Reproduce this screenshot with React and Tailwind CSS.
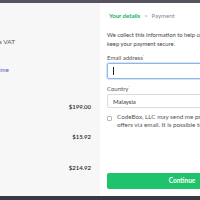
export default function App() {
  return (
    <div className="w-[200px] h-[200px] overflow-hidden flex flex-col bg-[#3b3943] font-['Lato',sans-serif]">
      {/* backdrop strip */}
      <div className="h-[3px] shrink-0 bg-[#57525f]" />

      <div className="flex h-[193px] shrink-0">
        {/* Order summary */}
        <div className="w-[100px] shrink-0 overflow-hidden flex justify-end bg-[#f7f7f8]">
          <div className="w-[200px] shrink-0 flex flex-col pr-[9px] pt-[35px] text-[6.5px] leading-[8px]">
            <p className="w-[115px] text-right text-[#555]">Price includes VAT</p>
            <p className="w-[109px] mt-[20px] text-right text-[#5b5fc7]">Cancel at any time</p>
            <p className="mt-[29px] text-right text-[6px] font-semibold text-[#222]">$199.00</p>
            <p className="mt-[22px] text-right text-[6px] font-semibold text-[#222]">$15.92</p>
            <p className="mt-[23px] text-right text-[6px] font-semibold text-[#222]">$214.92</p>
          </div>
        </div>

        {/* Checkout form */}
        <div className="flex-1 overflow-hidden bg-white pl-[7px] pt-[8px] pb-[7px] flex">
          <div className="w-[150px] shrink-0 flex flex-col">
            <div className="ml-[2px] flex items-center gap-[4px] text-[6px] leading-[9px]">
              <span className="font-bold text-[#1aae62]">Your details</span>
              <span className="text-[#999]">&gt;</span>
              <span className="text-[#888]">Payment</span>
            </div>

            <p className="mt-[10px] whitespace-nowrap text-[5.8px] leading-[9px] text-[#444]">
              We collect this information to help combat fraud, and to
              <br />
              keep your payment secure.
            </p>

            <label className="mt-[6px] text-[6px] leading-[7px] text-[#555]">
              Email address<sup className="text-[4px] text-[#888]">*</sup>
            </label>
            <div className="mt-[2px] h-[16px] rounded-[2px] border border-[#8fb4ee] shadow-[0_0_0_1px_#d6e4fa] flex items-center pl-[5px]">
              <span className="w-[0.5px] h-[8px] bg-[#222]" />
            </div>

            <label className="mt-[6px] text-[6px] leading-[7px] text-[#555]">
              Country<sup className="text-[4px] text-[#888]">*</sup>
            </label>
            <div className="mt-[2px] h-[14px] rounded-[2px] border border-[#dcdcdc] flex items-center pl-[5px] text-[6px] text-[#333]">
              Malaysia
            </div>

            <div className="mt-[5px] flex gap-[5px]">
              <span className="mt-[3px] w-[5px] h-[5px] shrink-0 rounded-[1px] border border-[#bbb]" />
              <p className="whitespace-nowrap text-[6.3px] leading-[8px] text-[#555]">
                CodeBox, LLC may send me product updates and
                <br />
                offers via email. It is possible to opt-out at any time.
              </p>
            </div>

            <button className="mt-auto h-[16px] rounded-[2px] bg-[#1fc36b] text-white text-[6.5px] font-bold">
              Continue
            </button>
          </div>
        </div>
      </div>

      <div className="flex-1 bg-[#3a3842]" />
    </div>
  );
}
